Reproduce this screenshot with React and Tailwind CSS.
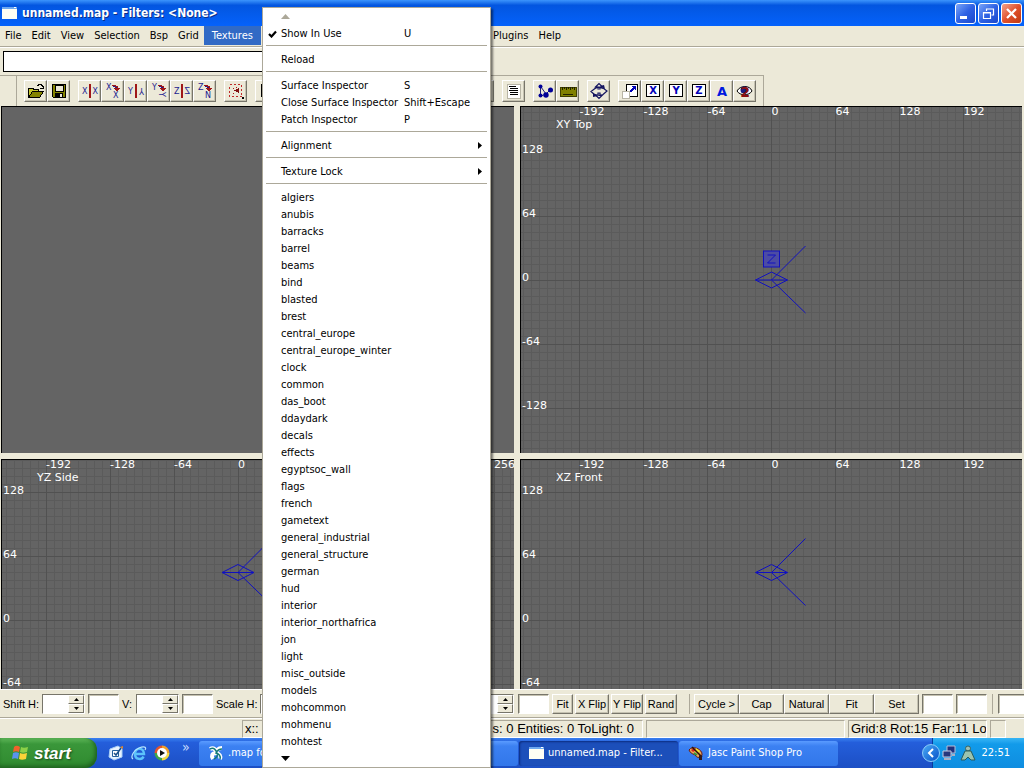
import React from 'react'
import clsx from 'clsx'

const TEXTURES = [
  'algiers', 'anubis', 'barracks', 'barrel', 'beams', 'bind', 'blasted', 'brest', 'central_europe',
  'central_europe_winter', 'clock', 'common', 'das_boot', 'ddaydark', 'decals', 'effects', 'egyptsoc_wall',
  'flags', 'french', 'gametext', 'general_industrial', 'general_structure', 'german', 'hud', 'interior',
  'interior_northafrica', 'jon', 'light', 'misc_outside', 'models', 'mohcommon', 'mohmenu', 'mohtest'
]

const WindowGlyph = () => (
  <svg width="16" height="16" viewBox="0 0 16 16" className="shrink-0" shapeRendering="crispEdges" aria-hidden="true">
    <rect x="1" y="2" width="15" height="12" fill="#fffff4" />
    <rect x="1" y="2" width="15" height="2" fill="#6fa9ef" />
    <rect x="13" y="2" width="2" height="1" fill="#fff" />
  </svg>
)

const CaptionButton = ({ label, close, children }) => (
  <button
    aria-label={label}
    className={clsx(
      'h-[21px] w-[21px] rounded-[3px] border border-white',
      close
        ? 'bg-linear-to-br from-[#f0a088] via-[#e0512c] to-[#c03a10]'
        : 'bg-linear-to-br from-[#7ba4f8] via-[#2f62e4] to-[#1a48cc]'
    )}
  >
    <svg width="19" height="19" viewBox="0 0 19 19" fill="none" stroke="#fff">
      {children}
    </svg>
  </button>
)

const TitleBar = () => (
  <header className="flex h-[26px] shrink-0 items-center justify-between bg-linear-to-b from-[#3c94fc] via-[#0356e0] via-20% to-[#0562fb] pr-0.5 pl-px">
    <div className="flex items-center gap-[5px]">
      <WindowGlyph />
      <h1 className="font-['DejaVu_Sans_Condensed','DejaVu_Sans',sans-serif] text-[12px] font-bold whitespace-pre text-white [text-shadow:1px_1px_0_#0a2f8a]">
        unnamed.map - Filters: &lt;None&gt;
      </h1>
    </div>
    <div className="flex gap-0.5">
      <CaptionButton label="Minimize">
        <path d="M4 13.5h7" strokeWidth="3" />
      </CaptionButton>
      <CaptionButton label="Restore">
        <path d="M7.500 7V5h7v6h-2M7 5h8" strokeWidth="1.200" />
        <path d="M4.500 8.500h7v6h-7zM4 9h8" strokeWidth="1.200" />
      </CaptionButton>
      <CaptionButton label="Close" close>
        <path d="M5 5l9 9M14 5l-9 9" strokeWidth="2.300" />
      </CaptionButton>
    </div>
  </header>
)

const MenuItem = ({ label, keys, checked, submenu }) => (
  <li role="none">
    <button role="menuitem" className="flex h-[17px] w-full items-center text-left whitespace-nowrap">
      <span className="w-[18px] shrink-0 pl-[5px]">
        {checked && (
          <svg width="9" height="8" viewBox="0 0 9 8" aria-hidden="true">
            <path d="M1 4l2.500 2.500L8 1.500" fill="none" stroke="#000" strokeWidth="2.200" />
          </svg>
        )}
      </span>
      <span className={keys ? 'w-[123px]' : 'flex-1'}>{label}</span>
      {keys && <span>{keys}</span>}
      {submenu && (
        <svg width="4" height="7" viewBox="0 0 4 7" className="mr-2" aria-hidden="true">
          <path d="M0 0l4 3.500L0 7z" />
        </svg>
      )}
    </button>
  </li>
)

const Separator = () => (
  <li role="separator" className="h-[9px] px-[3px] pt-[3px]">
    <span className="block h-px w-full bg-[#aca899]" />
  </li>
)

const ScrollArrow = ({ up }) => (
  <li role="none" className="flex h-[17px] items-center pl-[18px]">
    <svg width="9" height="5" viewBox="0 0 9 5" aria-hidden="true">
      {up ? <path d="M0 5L4.500 0 9 5z" fill="#aca899" /> : <path d="M0 0h9L4.500 5z" />}
    </svg>
  </li>
)

const TexturesMenu = () => (
  <ul
    role="menu"
    aria-label="Textures"
    className="absolute top-[7px] left-[262px] z-10 w-[229px] border border-[#aca899] bg-white text-black shadow-[2px_2px_2px_rgba(0,0,0,0.5)]"
  >
    <ScrollArrow up />
    <MenuItem label="Show In Use" keys="U" checked />
    <Separator />
    <MenuItem label="Reload" />
    <Separator />
    <MenuItem label="Surface Inspector" keys="S" />
    <MenuItem label="Close Surface Inspector" keys="Shift+Escape" />
    <MenuItem label="Patch Inspector" keys="P" />
    <Separator />
    <MenuItem label="Alignment" submenu />
    <Separator />
    <MenuItem label="Texture Lock" submenu />
    <Separator />
    {TEXTURES.map((name) => (
      <MenuItem key={name} label={name} />
    ))}
    <ScrollArrow />
  </ul>
)

const MenuBar = () => (
  <nav className="flex h-[22px] shrink-0 border-b border-white">
    <div className="flex w-full border-b border-[#aca899] pb-px">
      <div className="flex w-[487px] shrink-0">
        {['File', 'Edit', 'View', 'Selection', 'Bsp', 'Grid'].map((name) => (
          <button key={name} className="px-[5px]">{name}</button>
        ))}
        <button className="bg-[#316ac5] px-2 text-white">Textures</button>
      </div>
      <button className="px-1.5">Plugins</button>
      <button className="px-1">Help</button>
    </div>
  </nav>
)

const ToolButton = ({ label, children }) => (
  <button
    aria-label={label}
    className="flex h-[22px] w-[23px] shrink-0 items-center justify-center border border-t-white border-r-[#77756a] border-b-[#77756a] border-l-white shadow-[inset_-1px_-1px_0_#c5c2b1]"
  >
    <svg width="18" height="18" viewBox="0 0 18 18" fill="none" shapeRendering="crispEdges">
      {children}
    </svg>
  </button>
)

const letter = "font-['DejaVu_Sans',sans-serif] text-[8px]"

const FlipIcon = ({ axis, mirror }) => (
  <g fill="#1c1c90" className={letter}>
    <text x="1" y="12">{axis}</text>
    <text x="1" y="12" transform={mirror}>{axis}</text>
    <path d="M9 2v14" stroke="#a01818" strokeWidth="2" />
  </g>
)

const RotateIcon = ({ from, to = from, turn }) => (
  <g fill="#1c1c90" className={letter}>
    <text x="2" y="8">{from}</text>
    <text x="9" y="16" transform={turn}>{to}</text>
    <path d="M8 3.500h3v1h2v3" stroke="#a01818" />
    <path d="M10 6h6l-3 4z" fill="#a01818" />
  </g>
)

const BoxedLetter = ({ name }) => (
  <g>
    <rect x="2.500" y="2.500" width="13" height="12" fill="#fff" stroke="#000" />
    <text x="9" y="12" textAnchor="middle" fill="#0000b8" className="font-['DejaVu_Sans',sans-serif] text-[10px] font-bold">
      {name}
    </text>
  </g>
)

const ToolGroup = ({ children }) => <div className="flex">{children}</div>

const Toolbar = () => (
  <div className="flex h-[31px] w-fit shrink-0 border-t border-r border-[#aca899] pr-[7px]">
    <div className="mr-[7px] w-[17px] border-r border-[#aca899]" />
    <div className="flex items-center gap-2">
      <div className="flex w-[470px] shrink-0 gap-2">
        <ToolGroup>
          <ToolButton label="Open">
            <path d="M1.500 15V6h4l1 1h5v2" fill="#c8c830" stroke="#000" />
            <path d="M1.500 15.500l4-6h11l-4 6z" fill="#848400" stroke="#000" />
            <path d="M10 3.500h1l1-1h2l2 2v2M13 6.500h4" stroke="#000" />
          </ToolButton>
          <ToolButton label="Save">
            <path d="M2.500 2.500h13v13h-12l-1-1z" fill="#848400" stroke="#000" />
            <path d="M5 3h8v6H5z" fill="#ece9d8" stroke="#000" />
            <path d="M5 11h8v5H5z" fill="#000" />
            <path d="M10 12h2v3h-2z" fill="#ece9d8" />
          </ToolButton>
        </ToolGroup>
        <ToolGroup>
          <ToolButton label="Flip X"><FlipIcon axis="X" mirror="matrix(-1 0 0 1 18 0)" /></ToolButton>
          <ToolButton label="Rotate X"><RotateIcon from="X" /></ToolButton>
          <ToolButton label="Flip Y"><FlipIcon axis="Y" mirror="rotate(180 9 9)" /></ToolButton>
          <ToolButton label="Rotate Y"><RotateIcon from="Y" turn="rotate(90 12 13)" /></ToolButton>
          <ToolButton label="Flip Z"><FlipIcon axis="Z" mirror="matrix(-1 0 0 1 18 0)" /></ToolButton>
          <ToolButton label="Rotate Z"><RotateIcon from="Z" to="N" /></ToolButton>
        </ToolGroup>
        <ToolGroup>
          <ToolButton label="Complete tall">
            <rect x="2.500" y="2.500" width="12" height="12" stroke="#c02828" strokeDasharray="2 2" />
            <path d="M6 6h1M6 11h1M9 5h1" stroke="#b01818" />
            <path d="M12 6v5L7 8.500z" fill="#801010" />
            <path d="M15 15h2v2h-2z" fill="#000" />
          </ToolButton>
        </ToolGroup>
        <ToolGroup>
          <ToolButton label="Selection"><path d="M3.500 2.500h12v12h-12zM4 6.500h11M4 10.500h11" stroke="#000" /></ToolButton>
        </ToolGroup>
        <div className="ml-auto">
          <ToolButton label="Clip" />
        </div>
      </div>
      <ToolGroup>
        <ToolButton label="Console">
          <path d="M2 2h13v14H2z" fill="#fff" stroke="#b8b5a5" />
          <path d="M4 4.500h7M5 6.500h8M4 8.500h9M5 10.500h8M5 12.500h8" stroke="#000" />
        </ToolButton>
      </ToolGroup>
      <ToolGroup>
        <ToolButton label="Patch vertices">
          <g shapeRendering="auto">
            <path d="M4.500 5v9M5 5l5 7M5 14l5-2 4-4" stroke="#20207c" />
            <circle cx="4.500" cy="4.500" r="2" fill="#000098" />
            <circle cx="4.500" cy="13.500" r="2" fill="#000098" />
            <circle cx="10" cy="13" r="2.700" fill="#000098" />
            <circle cx="14.500" cy="8" r="2.500" fill="#000098" />
          </g>
        </ToolButton>
        <ToolButton label="Ruler">
          <path d="M1 5h16v9H1z" fill="#808000" stroke="#404000" />
          <path d="M3.500 5v3M5.500 5v2M7.500 5v3M9.500 5v2M11.500 5v3M13.500 5v2M15.500 5v3M4 12.500h10" stroke="#202000" />
        </ToolButton>
      </ToolGroup>
      <ToolGroup>
        <ToolButton label="Free rotate">
          <g shapeRendering="auto">
            <path d="M5.500 5L9 1.500 12.500 5H10v2H8V5zM5.500 13L9 16.500l3.500-3.500H10v-2H8v2zM5 6.500L1 9.500l4 3.500M13 6l4 3-4 3.500M5 6.500c3-2 6-1 8 0M5 12.500c3 1 6 1 8 0" stroke="#151560" strokeWidth="1.200" />
            <path d="M3 11l5 3-5 1zM15 7l-5-3 4-1z" fill="#151560" />
          </g>
        </ToolButton>
      </ToolGroup>
      <ToolGroup>
        <ToolButton label="Scale">
          <path d="M5.500 2.500h11v12h-11z" fill="#fff" stroke="#000" />
          <path d="M1 9h7v7H1z" fill="#fff" stroke="#b8b5a5" />
          <path d="M9 10l4-4" stroke="#0000b8" strokeWidth="2" />
          <path d="M10 4h5v5z" fill="#0000b8" />
        </ToolButton>
        <ToolButton label="Scale X"><BoxedLetter name="X" /></ToolButton>
        <ToolButton label="Scale Y"><BoxedLetter name="Y" /></ToolButton>
        <ToolButton label="Scale Z"><BoxedLetter name="Z" /></ToolButton>
        <ToolButton label="Texture all">
          <text x="9" y="14" textAnchor="middle" fill="#0018e0" className="font-['DejaVu_Sans',sans-serif] text-[13px] font-bold">A</text>
        </ToolButton>
        <ToolButton label="Show entities">
          <g shapeRendering="auto">
            <path d="M1 9c3-6 13-6 15 0-3 5-12 5-15 0z" fill="#fff" stroke="#000" />
            <circle cx="8" cy="8" r="3.500" fill="#1c1c80" />
          </g>
          <text x="9" y="15" textAnchor="middle" fill="#8b0f12" className="font-['DejaVu_Sans',sans-serif] text-[14px] font-bold">2</text>
        </ToolButton>
      </ToolGroup>
    </div>
  </div>
)

const STEPS = Array.from({ length: 241 }, (_, i) => i - 120)
const MAJOR_STEPS = STEPS.filter((n) => n % 8 === 0)
const MARKS = [-192, -128, -64, 0, 64, 128, 192]

const gridPath = (steps) => steps.map((n) => `M${n * 8} -960V960M-960 ${n * 8}H960`).join('')

// ox / oy: world origin, cameraY: camera height, all measured from the middle of the pane
const GridView = ({ title, ox = 0, oy = 0, cameraY = 0, marks = MARKS, zBox }) => (
  <svg
    role="img"
    aria-label={title}
    className="h-full min-h-0 w-full overflow-hidden border-t border-l border-black bg-[#646464] font-['DejaVu_Sans',sans-serif] text-[11px]"
  >
    <svg x="50%" y="50%" overflow="visible">
      <g transform={`translate(${ox} ${oy})`} shapeRendering="crispEdges">
        <path d={gridPath(STEPS)} stroke="#5b5b5b" />
        <path d={gridPath(MAJOR_STEPS)} stroke="#515151" />
      </g>
      <g transform={`translate(${ox} ${cameraY})`} stroke="#1010c0" fill="none">
        <path d="M-16 0L0 -8L16 0L0 8ZM-16 0H16M0 0L34 -34M0 0L34 33" />
        {zBox && (
          <>
            <rect x="-8" y="-29" width="16" height="16" fill="#4c4ca4" />
            <path d="M-4 -25H4L-4 -17H4" />
          </>
        )}
      </g>
    </svg>
    <g fill="#fff">
      <svg x="50%" overflow="visible">
        {marks.map((n) => (
          <text key={n} x={ox + n} y="8">{n}</text>
        ))}
      </svg>
      <svg y="50%" overflow="visible">
        {[-128, -64, 0, 64, 128].map((n) => (
          <text key={n} x="1" y={oy - n + 1}>{n}</text>
        ))}
      </svg>
      <text x="35" y="21">{title}</text>
    </g>
  </svg>
)

const Viewports = () => (
  <main className="grid min-h-0 flex-1 grid-cols-[513fr_502fr] grid-rows-[347fr_230fr] gap-1.5 pr-0.5 pl-px">
    <div className="border-t border-l border-black bg-[#646464]" />
    <GridView title="XY Top" zBox />
    <GridView title="YZ Side" ox={-20} oy={46} cameraY={-2} marks={[...MARKS, 256]} />
    <GridView title="XZ Front" oy={46} cameraY={-2} />
  </main>
)

const sunken = 'border border-t-[#77756a] border-r-white border-b-white border-l-[#77756a] bg-white'

const Field = ({ label, className = 'w-[31px]' }) => (
  <input aria-label={label} className={clsx('h-5 shrink-0 shadow-[inset_1px_1px_0_#c5c2b1]', sunken, className)} />
)

const Spinner = ({ label }) => (
  <div className={clsx('flex h-5 w-[43px] shrink-0', sunken)}>
    <input id={label} aria-label={label} className="w-[25px] min-w-0" />
    <div className="flex w-4 flex-col bg-[#ece9d8]">
      {['up', 'down'].map((dir) => (
        <button
          key={dir}
          aria-label={`${label} ${dir}`}
          className="flex h-[9px] items-center justify-center border border-t-white border-r-[#77756a] border-b-[#77756a] border-l-white"
        >
          <svg width="5" height="3" viewBox="0 0 5 3">
            <path d={dir === 'up' ? 'M0 3L2.500 0 5 3z' : 'M0 0h5L2.500 3z'} />
          </svg>
        </button>
      ))}
    </div>
  </div>
)

const PushButton = ({ className, children }) => (
  <button
    className={clsx(
      'h-5 shrink-0 border border-t-white border-r-[#77756a] border-b-[#77756a] border-l-white whitespace-nowrap shadow-[inset_-1px_-1px_0_#c5c2b1]',
      className
    )}
  >
    {children}
  </button>
)

const SurfaceBar = () => (
  <div className="flex h-[29px] shrink-0 items-center overflow-hidden border-y border-t-white border-b-[#aca899] font-['Liberation_Sans',sans-serif] text-[11px]">
    <div className="flex w-[514px] shrink-0 items-center gap-[3px] pl-[3px]">
      <label htmlFor="Shift H" className="w-9 whitespace-pre">Shift H:</label>
      <Spinner label="Shift H" />
      <Field label="Shift H step" />
      <label htmlFor="Shift V" className="w-[11px]">V:</label>
      <Spinner label="Shift V" />
      <Field label="Shift V step" />
      <label htmlFor="Scale H" className="w-[41px] whitespace-pre">Scale H:</label>
      <Spinner label="Scale H" />
      <div className="ml-auto">
        <Spinner label="Rotate" />
      </div>
    </div>
    <div className="flex items-center gap-0.5 pl-1">
      <Field label="Rotate step" />
      <PushButton className="ml-px w-[21px]">Fit</PushButton>
      <PushButton className="w-[34px]">X Flip</PushButton>
      <PushButton className="w-8">Y Flip</PushButton>
      <PushButton className="w-8">Rand</PushButton>
    </div>
    <div className="ml-3 h-5 border-l border-[#aca899]" />
    <div className="ml-1 flex items-center">
      {['Cycle >', 'Cap', 'Natural', 'Fit', 'Set'].map((name) => (
        <PushButton key={name} className="w-[45px]">{name}</PushButton>
      ))}
    </div>
    <div className="ml-[3px] flex items-center gap-[3px]">
      <Field label="Width" />
      <Field label="Height" />
    </div>
    <div className="ml-[5px] h-5 border-l border-[#aca899]" />
    <Field label="Texture" className="ml-[5px] w-[60px]" />
  </div>
)

const panel = 'border border-t-[#aca899] border-r-white border-b-white border-l-[#aca899] whitespace-nowrap overflow-hidden px-0.5'

const StatusBar = () => (
  <div className="flex h-5 shrink-0 gap-[3px] border-t border-white pt-px pr-[18px] pl-[242px] font-['Liberation_Sans',sans-serif] text-[13px] leading-4">
    <div className={clsx(panel, 'flex w-[401px] shrink-0 justify-between pr-2')}>
      <span>x::</span>
      <span>s: 0 Entities: 0 ToLight: 0</span>
    </div>
    <div className={clsx(panel, 'flex-1')} />
    <div className={clsx(panel, 'w-[139px] shrink-0')}>Grid:8 Rot:15 Far:11 Lo</div>
    <div className={clsx(panel, 'w-4 shrink-0')} />
  </div>
)

const TaskButton = ({ active, icon, children }) => (
  <button
    className={clsx(
      'flex h-[25px] w-[159px] shrink-0 items-center gap-1 rounded-[3px] pl-[9px] text-left whitespace-nowrap',
      active
        ? 'bg-[#1c4fba] shadow-[inset_1px_1px_2px_#0c2d80]'
        : 'bg-linear-to-b from-[#5a9bff] via-[#3c81f2] via-20% to-[#3277ea]'
    )}
  >
    {icon}
    {children}
  </button>
)

const RadiantIcon = () => (
  <svg width="16" height="16" viewBox="0 0 16 16" aria-hidden="true">
    <g fill="none" stroke="#fff" strokeWidth="4">
      <path d="M2 4c4-2 6 1 6 4M14 3c-4 0-6 3-6 5M8 8c-4 0-5 3-3 6M8 8c4 1 5 3 4 6" />
    </g>
    <path d="M2 4c4-2 6 1 7 4s-1 5-3 6M14 4c-3 0-5 2-6 4 3 1 5 3 4 6" fill="none" stroke="#147a78" strokeWidth="1.500" />
  </svg>
)

const PaintIcon = () => (
  <svg width="16" height="16" viewBox="0 0 16 16" aria-hidden="true">
    <path d="M1 5C4 0 15 4 14 10c-1 3-5 3-6 1S2 9 1 5z" fill="#e9a558" stroke="#6b1a10" />
    <path d="M3 5l3-2 2 2-3 2z" fill="#d81e1e" />
    <path d="M8 3l4 3-2 2-3-2z" fill="#f5e62c" />
    <path d="M4 2l10 10" stroke="#281008" strokeWidth="1.500" />
    <path d="M11 10l3 1v4h-3z" fill="#301818" />
    <path d="M6 8l3 2" stroke="#2f9a3c" strokeWidth="2" />
  </svg>
)

const QuickLaunch = () => (
  <div className="flex items-center gap-[7px]">
    <button aria-label="Show Desktop">
      <svg width="16" height="16" viewBox="0 0 16 16">
        <path d="M2 4l8-3 4 3v8l-8 3-5-3z" fill="#e8f3ff" stroke="#a9cff5" />
        <path d="M4.500 5.500h6v6h-6z" fill="#fff" stroke="#22609c" />
        <path d="M6 8l2 2 5-7" fill="none" stroke="#1a4f88" strokeWidth="1.500" />
        <path d="M12 2l3-1v3z" fill="#e0862c" />
      </svg>
    </button>
    <button aria-label="Internet Explorer">
      <svg width="16" height="16" viewBox="0 0 16 16" fill="none">
        <path d="M4 9h9c0-7-9-7-9 0 0 6 7 6 8.500 2.500" stroke="#5cc3fb" strokeWidth="2.500" />
        <path d="M2 14c-3-2 1-9 6-11s8-1 6 2" stroke="#b7e6ff" strokeWidth="1.200" />
      </svg>
    </button>
    <button aria-label="Media Player">
      <svg width="16" height="16" viewBox="0 0 16 16" fill="none">
        <path d="M8 2a6 6 0 0 1 6 6" stroke="#f0a028" strokeWidth="3" />
        <path d="M14 8a6 6 0 0 1-6 6" stroke="#f4d840" strokeWidth="3" />
        <path d="M8 14a6 6 0 0 1-6-6" stroke="#3fa648" strokeWidth="3" />
        <path d="M2 8a6 6 0 0 1 6-6" stroke="#e2552c" strokeWidth="3" />
        <circle cx="8" cy="8" r="5" fill="#fff" />
        <path d="M6 5l5 3-5 3z" fill="#111" />
      </svg>
    </button>
    <button aria-label="More" className="mb-3 ml-[5px] text-[14px] leading-3 text-[#c8dcff]">»</button>
  </div>
)

const Taskbar = () => (
  <footer className="flex h-[30px] shrink-0 items-center bg-linear-to-b from-[#3a80f0] via-[#245edb] via-15% to-[#1c4fc4] text-white">
    <button className="flex h-full w-[97px] shrink-0 items-center gap-1 rounded-r-xl bg-linear-to-b from-[#5fb85a] via-[#3a973a] via-20% to-[#2f8a2f] pl-[10px] shadow-[inset_-2px_-2px_4px_#1d5f1d]">
      <svg width="20" height="18" viewBox="0 0 18 18" aria-hidden="true">
        <path d="M3 3c2-2 4-1 6 0L8 8C6 7 4 7 2 8z" fill="#f0622c" />
        <path d="M10 3c2 1 4 1 7 0l-1 5c-3 1-5 1-7 0z" fill="#8cd048" />
        <path d="M2 9c2-1 4-1 6 0l-1 6c-2-1-4-1-6 0z" fill="#5a93ee" />
        <path d="M9 9c2 1 4 1 7 0l-1 6c-3 1-5 1-7 0z" fill="#fbd438" />
      </svg>
      <span className="font-['Liberation_Sans',sans-serif] text-[17px] leading-none font-bold italic [text-shadow:1px_1px_2px_#1a4a1a]">start</span>
    </button>
    <div className="flex w-[102px] shrink-0 pl-[11px]">
      <QuickLaunch />
    </div>
    <div className="flex min-w-0 flex-1 gap-px">
      <TaskButton icon={<RadiantIcon />}>.map fo</TaskButton>
      <TaskButton />
      <TaskButton active icon={<WindowGlyph />}>unnamed.map - Filter...</TaskButton>
      <TaskButton icon={<PaintIcon />}>Jasc Paint Shop Pro</TaskButton>
    </div>
    <div className="flex h-full shrink-0 items-center">
      <button aria-label="Show hidden icons" className="z-1 -mr-2 h-[18px] w-[18px] rounded-full border border-[#8ccdf8] bg-linear-to-br from-[#4aa8f4] to-[#0a50c8]">
        <svg width="16" height="16" viewBox="0 0 16 16" fill="none" stroke="#fff" strokeWidth="2">
          <path d="M10 4L6 8l4 4" />
        </svg>
      </button>
      <div className="flex h-full items-center gap-[3px] border-l border-[#0a3b9c] bg-linear-to-b from-[#35b5f5] via-[#129bea] via-20% to-[#0f8de0] pr-3.5 pl-[8px]">
        <svg width="16" height="16" viewBox="0 0 16 16" aria-hidden="true">
          <path d="M6 1h8v7H6z" fill="#20307c" stroke="#b8bcd4" />
          <path d="M2 6h8v6H2z" fill="#28387c" stroke="#c8cbe0" />
          <path d="M3 14h7M11 10h3" stroke="#aab0c4" strokeWidth="2" />
        </svg>
        <svg width="16" height="16" viewBox="0 0 16 16" aria-hidden="true">
          <circle cx="8" cy="3.500" r="2.500" fill="#9fc0b4" stroke="#3a6460" />
          <path d="M5 6h6l4 9h-4l-3-3-3 3H1z" fill="#9cc4ae" stroke="#2a5c5c" />
        </svg>
        <time className="pl-0.5">22:51</time>
      </div>
    </div>
  </footer>
)

const App = () => (
  <div className="relative flex h-screen min-h-[600px] flex-col overflow-hidden bg-[#ece9d8] font-['DejaVu_Sans_Condensed','DejaVu_Sans',sans-serif] text-[11px] leading-4 text-black">
    <TitleBar />
    <MenuBar />
    <div className="shrink-0 py-[3px] pl-[3px]">
      <input aria-label="Texture filter" className="block h-[21px] w-[400px] border border-black bg-white px-1" />
    </div>
    <Toolbar />
    <Viewports />
    <SurfaceBar />
    <StatusBar />
    <Taskbar />
    <TexturesMenu />
  </div>
)

export default App
